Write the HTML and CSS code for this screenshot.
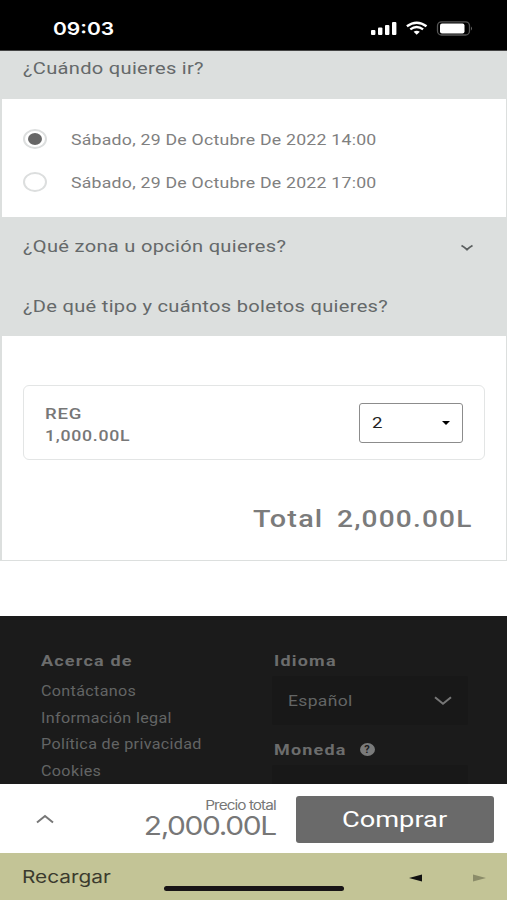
FILE: index.html
```html
<!DOCTYPE html>
<html lang="es">
<head>
<meta charset="utf-8">
<title>Boletos</title>
<link rel="stylesheet" href="styles.css">
</head>
<body>
<header class="status">
  <span class="wide time">09:03</span>
  <svg class="signals" width="104" height="18" viewBox="0 0 104 18">
    <g fill="#fff">
      <rect x="1" y="11" width="4.400" height="5" rx="1"/><rect x="8" y="8.500" width="4.400" height="7.500" rx="1"/><rect x="15" y="6" width="4.400" height="10" rx="1"/><rect x="22" y="3" width="4.400" height="13" rx="1"/>
      <path d="M43.600 12.800Q46.700 10.800 49.800 12.800L46.700 15.800Z"/>
    </g>
    <path d="M36.900 7.300Q46.700 0 56.500 7.300M40.300 10.400Q46.700 5.700 53.100 10.400" fill="none" stroke="#fff" stroke-width="2.400"/>
    <rect x="67.500" y="2.800" width="32" height="13.200" rx="4" fill="none" stroke="#555" stroke-width="1.300"/>
    <rect x="70" y="4.500" width="24.500" height="10" rx="2" fill="#fff"/>
    <path d="M101 7.500q2 2 0 4z" fill="#666"/>
  </svg>
</header>
<main class="form">
  <h2 class="bar bar-first"><span class="wide">¿Cuándo quieres ir?</span></h2>
  <div class="panel dates">
    <label class="option"><i class="radio on"></i><span class="wide date">Sábado, 29 De Octubre De 2022 14:00</span></label>
    <label class="option"><i class="radio"></i><span class="wide date">Sábado, 29 De Octubre De 2022 17:00</span></label>
  </div>
  <h2 class="bar bar-zone"><span class="wide">¿Qué zona u opción quieres?</span>
    <svg width="14" height="8" viewBox="0 0 14 8"><path d="M1.500 1.500Q4.500 3.200 7 5.600Q9.500 3.200 12.500 1.500" fill="none" stroke="#5c6060" stroke-width="1.900"/></svg></h2>
  <h2 class="bar bar-type"><span class="wide">¿De qué tipo y cuántos boletos quieres?</span></h2>
  <div class="panel tickets">
    <div class="ticket">
      <div class="kind"><span class="wide reg">REG</span><span class="wide price">1,000.00L</span></div>
      <div class="select"><span class="wide">2</span><svg width="8" height="4" viewBox="0 0 8 4"><path d="M0 0h8L4 4z"/></svg></div>
    </div>
    <div class="total"><span class="wide sum-label">Total</span><span class="wide sum">2,000.00L</span></div>
  </div>
</main>
<footer class="footer">
  <div class="about">
    <h3><span class="wide">Acerca de</span></h3>
    <a><span class="wide">Contáctanos</span></a>
    <a><span class="wide">Información legal</span></a>
    <a><span class="wide">Política de privacidad</span></a>
    <a><span class="wide">Cookies</span></a>
  </div>
  <div class="prefs">
    <h3><span class="wide">Idioma</span></h3>
    <div class="lang"><span class="wide">Español</span><svg width="18" height="10" viewBox="0 0 18 10"><path d="M1 1.200L9 7.800L17 1.200" fill="none" stroke="#777" stroke-width="2"/></svg></div>
    <h3 class="currency"><span class="wide">Moneda</span><i class="help"><b>?</b></i></h3>
    <div class="lang next"></div>
  </div>
</footer>
<section class="buy">
  <svg class="up" width="18" height="10" viewBox="0 0 18 10"><path d="M1 8.500L9 2L17 8.500" fill="none" stroke="#777" stroke-width="2"/></svg>
  <div class="amount"><span class="wide small">Precio total</span><span class="wide big">2,000.00L</span></div>
  <button class="button"><span class="wide comprar">Comprar</span></button>
</section>
<nav class="browser">
  <span class="wide reload">Recargar</span>
  <i class="home"></i>
  <svg class="arrows" width="78" height="8" viewBox="0 0 78 8"><path d="M0 4L13 .5V7.500Z" fill="#111"/><path d="M77 4L64 .5V7.500Z" fill="#8b8c69"/></svg>
</nav>
</body>
</html>
```
FILE: styles.css
```css
* { box-sizing: border-box; }
body { margin: 0; width: 507px; height: 900px; overflow: hidden; background: #fff; font-family: Roboto, sans-serif; color: #777; display: flex; flex-direction: column; }
h2, h3 { margin: 0; font-weight: 400; }
.wide { display: block; width: max-content; white-space: nowrap; line-height: 20px; transform: scaleX(1.2); transform-origin: left center; }
.status { height: 51px; flex: none; background: #000; display: flex; justify-content: space-between; padding: 19px 33px 0 53px; border-bottom: 1px solid #444; }
.time { font: 600 17.500px/20px Inter, sans-serif; color: #fff; }
.form { height: 510px; flex: none; background: #dcdfde; padding: 0 1px 1px 2px; }
.bar { display: flex; padding: 0 32px 0 21px; font-size: 17.300px; letter-spacing: .25px; color: #65696a; }
.bar .wide { transform: scaleX(1.163); }
.bar-first { height: 48px; padding-top: 7px; }
.bar-zone { height: 60px; padding-top: 19px; justify-content: space-between; }
.bar-zone svg { margin-top: 8px; }
.bar-type { height: 59px; padding-top: 19px; }
.panel { background: #fff; }
.dates { height: 118px; padding: 30px 21px; }
.option { display: flex; align-items: center; height: 20px; margin-bottom: 23px; font-size: 15.500px; letter-spacing: .2px; color: #808080; }
.option .wide { transform: scaleX(1.142); position: relative; top: 1px; }
.radio { width: 24px; height: 20px; margin-right: 24px; border: 2px solid #dcdede; border-radius: 50%; display: grid; place-items: center; flex: none; }
.radio.on::after { content: ""; width: 14px; height: 12px; border-radius: 50%; background: #666; }
.tickets { height: 224px; padding: 49px 21px 0 21px; }
.ticket { height: 75px; border: 1.500px solid #e3e5e5; border-radius: 6px; display: flex; justify-content: space-between; padding: 17px 21px 0; }
.kind { font-size: 14.500px; font-weight: 500; letter-spacing: .6px; padding-top: 1px; }
.kind .wide { line-height: 22px; }
.kind .reg { transform: scaleX(1.28); }
.kind .price { transform: scaleX(1.22); }
.select { width: 104px; height: 40px; border: 1.500px solid #8c8c8c; border-radius: 3px; display: flex; align-items: center; justify-content: space-between; padding: 0 12px; color: #222; font-size: 15.500px; }
.total { display: flex; margin-top: 49px; padding-left: 230px; font-size: 24px; font-weight: 500; letter-spacing: 1px; color: #7b7b7b; }
.sum-label { margin-right: 25px; }
.sum { transform: scaleX(1.17); }
.footer { margin-top: 55px; height: 168px; flex: none; background: #1b1b1b; color: #636565; padding: 35px 0 0 41px; display: grid; grid-template-columns: 231px 196px; overflow: hidden; font-size: 14.500px; letter-spacing: .3px; }
.footer h3 { font-size: 15px; font-weight: 700; letter-spacing: 1px; height: 20px; color: #6c6d6d; }
.about a { display: block; height: 26.700px; }
.about a .wide { transform: scaleX(1.112); }
.footer .about h3 { height: 31px; }
.prefs h3 { padding-left: 2px; }
.lang { height: 49px; margin: 5px 0 15px; background: #181818; border-radius: 2px; display: flex; align-items: center; justify-content: space-between; padding: 0 16px; font-size: 15.500px; }
.lang .wide { transform: scaleX(1.13); }
.currency { display: flex; }
.help { width: 15px; height: 13px; margin: 3px 0 0 25px; border-radius: 50%; background: #7a7b7b; color: #1b1b1b; display: grid; place-items: center; font: 11px/13px Roboto, sans-serif; letter-spacing: 0; }
.buy { height: 69px; flex: none; display: flex; padding: 12px 13px 0 36px; }
.up { margin-top: 18px; }
.amount { width: 130px; margin-left: 92px; font-family: Inter, sans-serif; display: flex; flex-direction: column; align-items: flex-end; }
.amount .wide { transform-origin: right center; }
.amount .small { font-size: 13px; line-height: 18px; letter-spacing: -.8px; transform: scaleX(1.18); }
.amount .big { font-size: 26px; line-height: 24px; letter-spacing: -1.200px; transform: scaleX(1.15); }
.button { width: 198px; height: 47px; margin-left: 20px; padding: 0 0 2px 46px; border: 0; border-radius: 3px; background: #6a6a6a; color: #fff; font: 22.500px Roboto, sans-serif; }
.comprar { transform: scaleX(1.21); }
.browser { height: 47px; flex: none; background: #c3c496; display: flex; padding: 14px 20px 0 22px; color: #3b3b2e; }
.reload { font: 17px/20px Inter, sans-serif; transform: scaleX(1.225); }
.home { width: 180px; height: 5px; border-radius: 3px; background: #181416; position: absolute; left: 164px; top: 886px; }
.arrows { margin: 7px 0 0 auto; }
```
